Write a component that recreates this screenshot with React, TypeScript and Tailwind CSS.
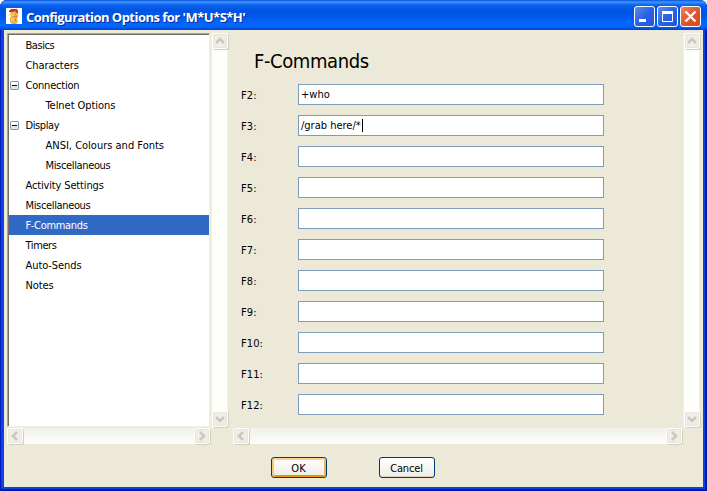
import type { ReactNode } from "react";

type Dir = "up" | "down" | "left" | "right";

const chevrons: Record<Dir, string> = {
  up: "M3 9 L7 5 L11 9",
  down: "M3 5 L7 9 L11 5",
  left: "M9 3 L5 7 L9 11",
  right: "M5 3 L9 7 L5 11",
};

function Arrow({ dir }: { dir: Dir }) {
  return (
    <div className="mb-px mr-px h-[16px] w-[16px] shrink-0 rounded-[2px] border border-white bg-[#eeeee6] shadow-[inset_0_0_0_1px_#e8e6da,1px_1px_0_#d0cfbf]">
      <svg width="14" height="14" viewBox="0 0 14 14" fill="none" stroke="#c9c9be" strokeWidth="2.6">
        <path d={chevrons[dir]} />
      </svg>
    </div>
  );
}

function VBar() {
  return (
    <div className="flex h-[395px] w-[17px] shrink-0 flex-col justify-between border-l border-r border-l-[#f0efe7] border-r-[#f0efe2] bg-[#fefefb]">
      <Arrow dir="up" />
      <Arrow dir="down" />
    </div>
  );
}

function HBar({ className }: { className: string }) {
  return (
    <div className={`flex h-[16px] justify-between bg-gradient-to-b from-[#f0f0e9] to-[#fefefb] ${className}`}>
      <Arrow dir="left" />
      <Arrow dir="right" />
    </div>
  );
}

type Item = { label: string; spacing: string; child?: boolean; open?: boolean; selected?: boolean };

const items: Item[] = [
  { label: "Basics", spacing: "tracking-[-0.42px]" },
  { label: "Characters", spacing: "tracking-[-0.08px]" },
  { label: "Connection", spacing: "tracking-[-0.22px]", open: true },
  { label: "Telnet Options", spacing: "tracking-[-0.05px]", child: true },
  { label: "Display", spacing: "tracking-[-0.4px]", open: true },
  { label: "ANSI, Colours and Fonts", spacing: "tracking-normal", child: true },
  { label: "Miscellaneous", spacing: "tracking-[-0.35px]", child: true },
  { label: "Activity Settings", spacing: "tracking-[-0.15px]" },
  { label: "Miscellaneous", spacing: "tracking-[-0.35px]" },
  { label: "F-Commands", spacing: "tracking-[-0.33px]", selected: true },
  { label: "Timers", spacing: "tracking-[-0.4px]" },
  { label: "Auto-Sends", spacing: "tracking-[-0.08px]" },
  { label: "Notes", spacing: "tracking-[-0.1px]" },
];

function TreeRow({ item }: { item: Item }) {
  return (
    <div className={`flex h-5 items-center ${item.selected ? "bg-[#316ac5] text-white" : ""}`}>
      <div className={`flex shrink-0 items-center pl-px ${item.child ? "w-[36.5px]" : "w-[16.5px]"}`}>
        {item.open && (
          <svg width="9" height="9" viewBox="0 0 9 9">
            <rect x=".5" y=".5" width="8" height="8" rx=".7" fill="#e9e5da" stroke="#7898b5" />
            <path d="M1 1h7v3H1z" fill="#fff" />
            <path d="M2 4.5h5" stroke="#000" />
          </svg>
        )}
      </div>
      <span className={`whitespace-nowrap pt-[2px] leading-5 ${item.spacing}`}>{item.label}</span>
    </div>
  );
}

const fields = [
  ["F2:", "+who"],
  ["F3:", "/grab here/*"],
  ["F4:", ""],
  ["F5:", ""],
  ["F6:", ""],
  ["F7:", ""],
  ["F8:", ""],
  ["F9:", ""],
  ["F10:", ""],
  ["F11:", ""],
  ["F12:", ""],
];

function Caption({ children, close }: { children: ReactNode; close?: boolean }) {
  return (
    <div
      className={`h-[21px] w-[21px] rounded-[3px] border border-white ${
        close
          ? "bg-gradient-to-br from-[#ea8265] via-[#e0552f] to-[#d04a20]"
          : "bg-gradient-to-br from-[#5d8bf0] via-[#2b62e4] to-[#1f55dc]"
      }`}
    >
      <svg width="19" height="19" viewBox="0 0 19 19" fill="none" stroke="#fff">{children}</svg>
    </div>
  );
}

export default function App() {
  return (
    <div className="h-[491px] w-[707px] overflow-hidden bg-white font-['DejaVu_Sans_Condensed','DejaVu_Sans',sans-serif] text-[11px] text-black">
      <div className="flex h-[491px] w-[707px] flex-col overflow-hidden rounded-t-[7px] bg-[#0a45e0] shadow-[inset_1px_0_0_#0018c0,inset_-2px_-2px_0_#0018a8]">
        <header className="flex h-[30px] shrink-0 items-start bg-[linear-gradient(#0a50d8_0,#3d95ff_2px,#0a62ee_5px,#0054e3_10px,#0058eb_17px,#0268ff_24px,#0263f8_27px,#0040c6_30px)] pl-[6px] pr-[6px]">
          <svg className="mt-2 shrink-0" width="16" height="16" viewBox="0 0 16 16">
            <path fill="#fff" d="M0 0h16v16H0z" />
            <path fill="#e8b34b" d="M5 3h6l1 2v4l-1 2 1 3-2 2H6l-2-2V10l1-2-1-2z" />
            <path fill="#f5ca70" d="M6 5h2v3H6zM5 10h3v3H5z" />
            <path fill="#c98b28" d="M9 6h1v1H9zM8 8h3v1H8zM9 11h1v2H9z" />
            <path fill="#cf301c" d="M5 1h6l1 2v2h-1L9 3 7 4H3V3z" />
          </svg>
          <h1 className="ml-1 mt-[6px] flex-1 whitespace-nowrap font-['Open_Sans','Noto_Sans',sans-serif] text-[13px] font-bold leading-[22px] tracking-[-0.52px] text-white [text-shadow:1px_1px_0_#0a2a90]">
            Configuration Options for 'M*U*S*H'
          </h1>
          <div className="mt-[6px] flex gap-[2px]">
            <Caption><path d="M4 13.5h7" strokeWidth="3" /></Caption>
            <Caption><path d="M4.5 4v10.5h10V4" /><path d="M4 5.5h11" strokeWidth="3" /></Caption>
            <Caption close><path d="M4.5 4.5l10 10M14.5 4.5l-10 10" strokeWidth="2.3" /></Caption>
          </div>
        </header>
        <main className="mx-1 h-[457px] shrink-0 bg-[#ece9d8] px-[3px] pt-[3px]">
          <div className="flex h-[411px]">
            <section className="w-[221px] shrink-0">
              <div className="flex h-[395px]">
                <div className="mr-px h-[394px] w-[203px] border-b border-l border-r border-t border-b-[#f1efe2] border-l-[#aca899] border-r-[#f1efe2] border-t-[#aca899] bg-white">
                  <div className="h-[392px] border-l border-t border-[#716f64]">
                    {items.map((item, i) => <TreeRow key={i} item={item} />)}
                  </div>
                </div>
                <VBar />
              </div>
              <HBar className="w-[204px]" />
            </section>
            <section className="ml-[5px] w-[467px] shrink-0">
              <div className="flex h-[395px] justify-between">
                <div className="w-[440px] pl-2">
                  <h2 className="h-[51px] whitespace-nowrap pl-[13px] pt-[14px] text-[20px] leading-[28px] tracking-[-0.4px]">F-Commands</h2>
                  <div className="flex flex-col gap-[10px]">
                    {fields.map(([key, value]) => (
                      <div key={key} className="flex h-[21px]">
                        <span className="w-[57px] shrink-0 leading-[24px] tracking-[0.1px]">{key}</span>
                        <div className="flex h-[21px] w-[306px] items-center border border-[#7f9db9] bg-white pl-[2px]">
                          <span className="leading-[19px]">{value}</span>
                          {key === "F3:" && <i className="ml-px h-[13px] w-px bg-black" />}
                        </div>
                      </div>
                    ))}
                  </div>
                </div>
                <VBar />
              </div>
              <HBar className="w-[450px]" />
            </section>
          </div>
          <div className="flex gap-[52px] pl-[264px] pt-[13px]">
            <button className="h-[21px] w-[56px] rounded-[3px] border border-[#003c74] bg-gradient-to-b from-white to-[#eeece4] pr-px pt-px leading-[19px] shadow-[inset_0_2px_0_#fbd58b,inset_2px_0_0_#f8c875,inset_-2px_0_0_#f0b44e,inset_0_-2px_0_#e59700]">OK</button>
            <button className="h-[21px] w-[56px] rounded-[3px] border border-[#003c74] bg-gradient-to-b from-white to-[#eeece4] pr-px pt-px leading-[19px] tracking-[-0.15px] shadow-[inset_0_-1px_0_#d9d3c8]">Cancel</button>
          </div>
        </main>
      </div>
    </div>
  );
}
